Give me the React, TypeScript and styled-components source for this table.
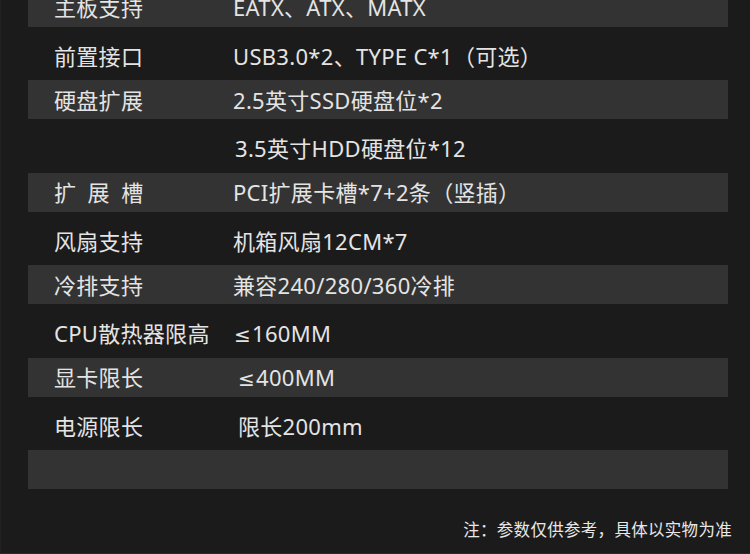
import React from 'react'
import styled, { createGlobalStyle } from 'styled-components'

const GlobalStyle = createGlobalStyle`
  html, body {
    margin: 0;
    padding: 0;
    background: #1b1b1b;
  }
  body {
    font-family: "Noto Sans", "Noto Sans CJK SC", sans-serif;
  }
`

const Page = styled.div`
  width: 750px;
  height: 554px;
  overflow: hidden;
  background: #1b1b1b;
  border-left: 1px solid #222;
  border-bottom: 1px solid #2a2a2a;
  box-sizing: border-box;
  color: #e4e4e4;
`

const Table = styled.div`
  display: flex;
  flex-direction: column;
  margin: -15.5px 22px 0 27px;
`

const Row = styled.div`
  height: 46.25px;
  padding-top: 3px;
  box-sizing: border-box;
  display: flex;
`

const Band = styled.div<{ $striped: boolean }>`
  height: 39px;
  flex: 1;
  display: flex;
  align-items: center;
  background: ${(p) => (p.$striped ? '#333333' : 'transparent')};
  padding-top: ${(p) => (p.$striped ? '0' : '5px')};
  box-sizing: border-box;
  font-size: 22px;
  line-height: 1;
  letter-spacing: 0.3px;
  white-space: nowrap;
`

const Label = styled.div`
  width: 205px;
  padding-left: 26px;
  box-sizing: border-box;
  flex: none;
`

const Value = styled.div<{ $shift: number }>`
  padding-left: ${(p) => p.$shift}px;
`

const Sym = styled.span`
  font-family: "DejaVu Sans", sans-serif;
  font-size: 20px;
  margin-right: 1px;
`

const Note = styled.div`
  text-align: right;
  padding: 24px 18px 0 0;
  font-size: 16.5px;
  letter-spacing: 0.3px;
  color: #e8e8e8;
`

const specs: { label: string; value: React.ReactNode; shift?: number }[] = [
  { label: '主板支持', value: 'EATX、ATX、MATX' },
  { label: '前置接口', value: 'USB3.0*2、TYPE C*1（可选）' },
  { label: '硬盘扩展', value: '2.5英寸SSD硬盘位*2' },
  { label: '', value: '3.5英寸HDD硬盘位*12', shift: 2 },
  { label: '扩\u2002展\u2002槽', value: 'PCI扩展卡槽*7+2条（竖插）' },
  { label: '风扇支持', value: '机箱风扇12CM*7' },
  { label: '冷排支持', value: '兼容240/280/360冷排', shift: -1 },
  { label: 'CPU散热器限高', value: <><Sym>≤</Sym>160MM</>, shift: 1 },
  { label: '显卡限长', value: <><Sym>≤</Sym>400MM</>, shift: 5 },
  { label: '电源限长', value: '限长200mm', shift: 5 },
  { label: '', value: '' },
]

export default function App() {
  return (
    <>
      <GlobalStyle />
      <Page>
        <Table>
          {specs.map((s, i) => (
            <Row key={i}>
              <Band $striped={i % 2 === 0}>
                <Label>{s.label}</Label>
                <Value $shift={s.shift ?? 0}>{s.value}</Value>
              </Band>
            </Row>
          ))}
        </Table>
        <Note>注：参数仅供参考，具体以实物为准</Note>
      </Page>
    </>
  )
}
